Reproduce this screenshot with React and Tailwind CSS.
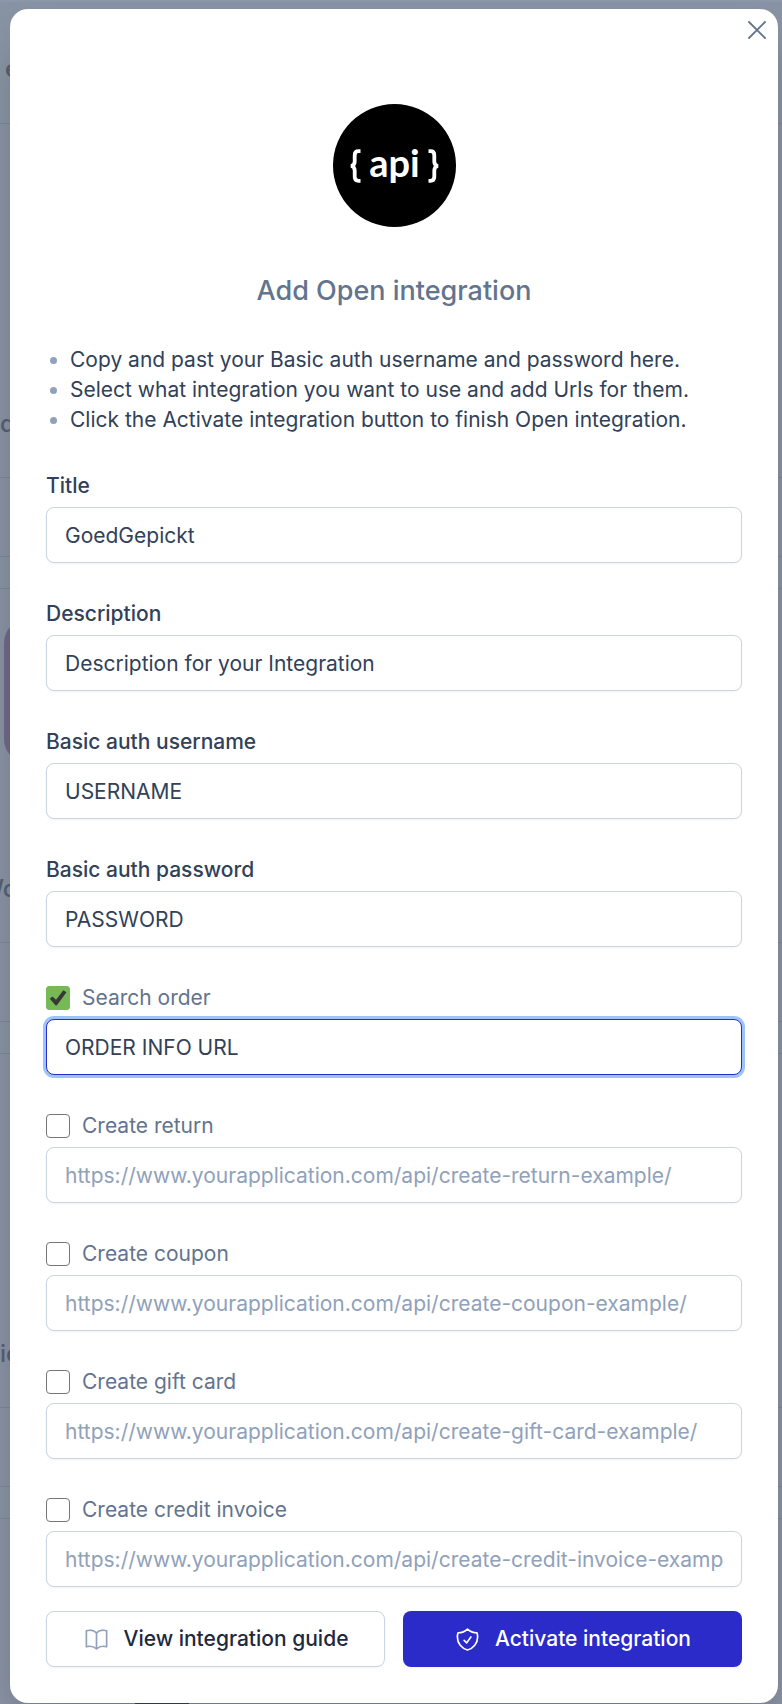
import { useState } from "react";

const fields = [
  { id: "title", label: "Title", value: "GoedGepickt" },
  { id: "description", label: "Description", value: "Description for your Integration" },
  { id: "username", label: "Basic auth username", value: "USERNAME" },
  { id: "password", label: "Basic auth password", value: "PASSWORD" },
];

const endpoints = [
  { id: "search-order", label: "Search order", checked: true, value: "ORDER INFO URL" },
  { id: "create-return", label: "Create return", placeholder: "https://www.yourapplication.com/api/create-return-example/" },
  { id: "create-coupon", label: "Create coupon", placeholder: "https://www.yourapplication.com/api/create-coupon-example/" },
  { id: "create-gift-card", label: "Create gift card", placeholder: "https://www.yourapplication.com/api/create-gift-card-example/" },
  { id: "create-credit-invoice", label: "Create credit invoice", placeholder: "https://www.yourapplication.com/api/create-credit-invoice-example/" },
];

const inputBase =
  "block h-14 w-full rounded-lg border bg-white px-[18px] text-[21px] leading-[30px] text-slate-700 outline-none placeholder:text-slate-400";

function BackdropCard({ title, tile, shift = "" }) {
  return (
    <div className="flex h-[434px] shrink-0 flex-col border-y border-[#7d8799] bg-[#8a93a4]">
      <div className="flex flex-1 flex-col justify-between pb-[35px] pt-[30px]">
        <div className={tile ? "ml-1 h-[144px] w-[144px] rounded-3xl bg-[#70688a]" : "h-[144px]"} />
        <div className={`h-9 whitespace-nowrap text-[24px] font-medium leading-9 text-[#566072] ${shift}`}>{title}</div>
      </div>
      <div className="h-[79px] border-t border-[#7d8799]" />
    </div>
  );
}

function Backdrop() {
  return (
    <div aria-hidden="true" className="absolute inset-0 flex flex-col overflow-hidden bg-[#8894a4]">
      <div className="h-[123px] shrink-0 border-t-2 border-[#8c98a9] pl-[5px] pt-[49px] text-[24px] font-semibold leading-9 text-[#566072]">
        e
      </div>
      <div className="flex flex-col gap-[31px]">
        <BackdropCard title="d" />
        <BackdropCard title="Wo" tile shift="-ml-5" />
        <BackdropCard title="io" />
        <BackdropCard title="" />
      </div>
      <div className="absolute bottom-0 left-[135px] h-px w-[54px] bg-[#3d4552]" />
    </div>
  );
}

function ApiLogo() {
  return (
    <svg viewBox="0 0 123 123" className="h-[123px] w-[123px]" role="img" aria-label="api">
      <circle cx="61.5" cy="61.5" r="61.5" fill="#000" />
      <path
        d="M27.500 47.200h-2c-2.800 0-3.800 1.200-3.800 4v6.300c0 2.500-1 4-3.700 4.500c2.700 .5 3.700 2 3.700 4.500v6.300c0 2.800 1 4 3.800 4h2M95.500 47.200h2c2.800 0 3.800 1.200 3.800 4v6.300c0 2.500 1 4 3.700 4.500c-2.700 .5-3.700 2-3.700 4.500v6.300c0 2.800-1 4-3.800 4h-2"
        fill="none"
        stroke="#fff"
        strokeWidth="3.800"
      />
      <text x="61.500" y="72.500" textAnchor="middle" fill="#fff" className="font-['Lato',sans-serif] text-[38px] font-bold">
        api
      </text>
    </svg>
  );
}

function CheckBox({ id, checked, onChange }) {
  return (
    <span className="relative flex h-6 w-6 shrink-0">
      <input
        id={id}
        type="checkbox"
        checked={checked}
        onChange={onChange}
        className="h-6 w-6 appearance-none rounded-[4px] border border-[#767676] bg-white checked:rounded-[3px] checked:border-[#77b956] checked:bg-[#77b956]"
      />
      {checked && (
        <svg viewBox="0 0 24 24" className="pointer-events-none absolute inset-0 h-6 w-6" aria-hidden="true">
          <path d="M3.800 12.800 6.500 10.400 10 13.800 17.300 4.300 20.500 6.300 11.300 18.800Q10.300 20 9.200 18.900Z" fill="#383838" />
        </svg>
      )}
    </span>
  );
}

function Endpoint({ item }) {
  const [checked, setChecked] = useState(Boolean(item.checked));
  return (
    <div className="flex flex-col gap-1.5">
      <div className="flex items-center gap-3">
        <CheckBox id={item.id} checked={checked} onChange={(e) => setChecked(e.target.checked)} />
        <label htmlFor={item.id} className="leading-[30px] text-slate-500">
          {item.label}
        </label>
      </div>
      <input
        type="text"
        aria-label={item.label + " URL"}
        defaultValue={item.value}
        placeholder={item.placeholder}
        className={
          item.checked
            ? `${inputBase} border-[#2b2bc9] ring-3 ring-[#9cc3fa]`
            : `${inputBase} border-slate-300 shadow-xs`
        }
      />
    </div>
  );
}

export default function App() {
  return (
    <div className="relative min-h-screen pb-px pl-[10px] pr-1 pt-[9px] font-['Inter',sans-serif] text-[21px]">
      <Backdrop />
      <main role="dialog" aria-labelledby="dialog-title" className="relative rounded-[18px] bg-white px-9 pb-9 pt-[95px] shadow-2xl">
        <button type="button" aria-label="Close" className="absolute right-2 top-2 flex h-[26px] w-[26px] items-center justify-center text-slate-500">
          <svg viewBox="0 0 18 18" className="h-[18px] w-[18px]" fill="none" stroke="currentColor" strokeWidth="1.800" strokeLinecap="round">
            <path d="M1 1 17 17M17 1 1 17" />
          </svg>
        </button>

        <div className="flex justify-center">
          <ApiLogo />
        </div>
        <h1 id="dialog-title" className="mt-[46px] text-center text-[27px] font-medium leading-9 text-slate-500">
          Add Open integration
        </h1>

        <ul className="mt-9 text-slate-700">
          {[
            "Copy and past your Basic auth username and password here.",
            "Select what integration you want to use and add Urls for them.",
            "Click the Activate integration button to finish Open integration.",
          ].map((line) => (
            <li key={line} className="flex items-center gap-[13px] pl-1 leading-[30px]">
              <span className="h-[7px] w-[7px] shrink-0 rounded-full bg-slate-400" />
              {line}
            </li>
          ))}
        </ul>

        <form className="mt-9 flex flex-col gap-9" onSubmit={(e) => e.preventDefault()}>
          {fields.map((f) => (
            <div key={f.id} className="flex flex-col gap-1.5">
              <label htmlFor={f.id} className="font-medium leading-[30px] text-slate-700">
                {f.label}
              </label>
              <input id={f.id} type="text" defaultValue={f.value} className={`${inputBase} border-slate-300 shadow-xs`} />
            </div>
          ))}
          {endpoints.map((item) => (
            <Endpoint key={item.id} item={item} />
          ))}
          <div className="-mt-3 grid grid-cols-2 gap-[18px]">
            <button type="button" className="flex h-14 items-center justify-center gap-3.5 rounded-lg border border-slate-300 bg-white font-medium text-slate-800 shadow-xs">
              <svg viewBox="0 0 24 24" className="h-[27px] w-[27px] text-slate-400" fill="none" stroke="currentColor" strokeWidth="1.500" strokeLinecap="round" strokeLinejoin="round" aria-hidden="true">
                <path d="M12 6.042A8.967 8.967 0 0 0 6 3.750c-1.052 0-2.062.18-3 .512v14.250A8.987 8.987 0 0 1 6 18c2.305 0 4.408.867 6 2.292m0-14.250a8.966 8.966 0 0 1 6-2.292c1.052 0 2.062.18 3 .512v14.250A8.987 8.987 0 0 0 18 18a8.967 8.967 0 0 0-6 2.292m0-14.250v14.250" />
              </svg>
              View integration guide
            </button>
            <button type="submit" className="flex h-14 items-center justify-center gap-3.5 rounded-lg bg-[#2b2bc9] font-medium text-white shadow-xs">
              <svg viewBox="0 0 24 24" className="h-[27px] w-[27px]" fill="none" stroke="currentColor" strokeWidth="1.500" strokeLinecap="round" strokeLinejoin="round" aria-hidden="true">
                <path d="M9 12.750 11.250 15 15 9.750m-3-7.036A11.959 11.959 0 0 1 3.598 6 11.990 11.990 0 0 0 3 9.749c0 5.592 3.824 10.290 9 11.623 5.176-1.332 9-6.030 9-11.622 0-1.310-.21-2.571-.598-3.751h-.152c-3.196 0-6.100-1.248-8.250-3.285Z" />
              </svg>
              Activate integration
            </button>
          </div>
        </form>
      </main>
    </div>
  );
}
